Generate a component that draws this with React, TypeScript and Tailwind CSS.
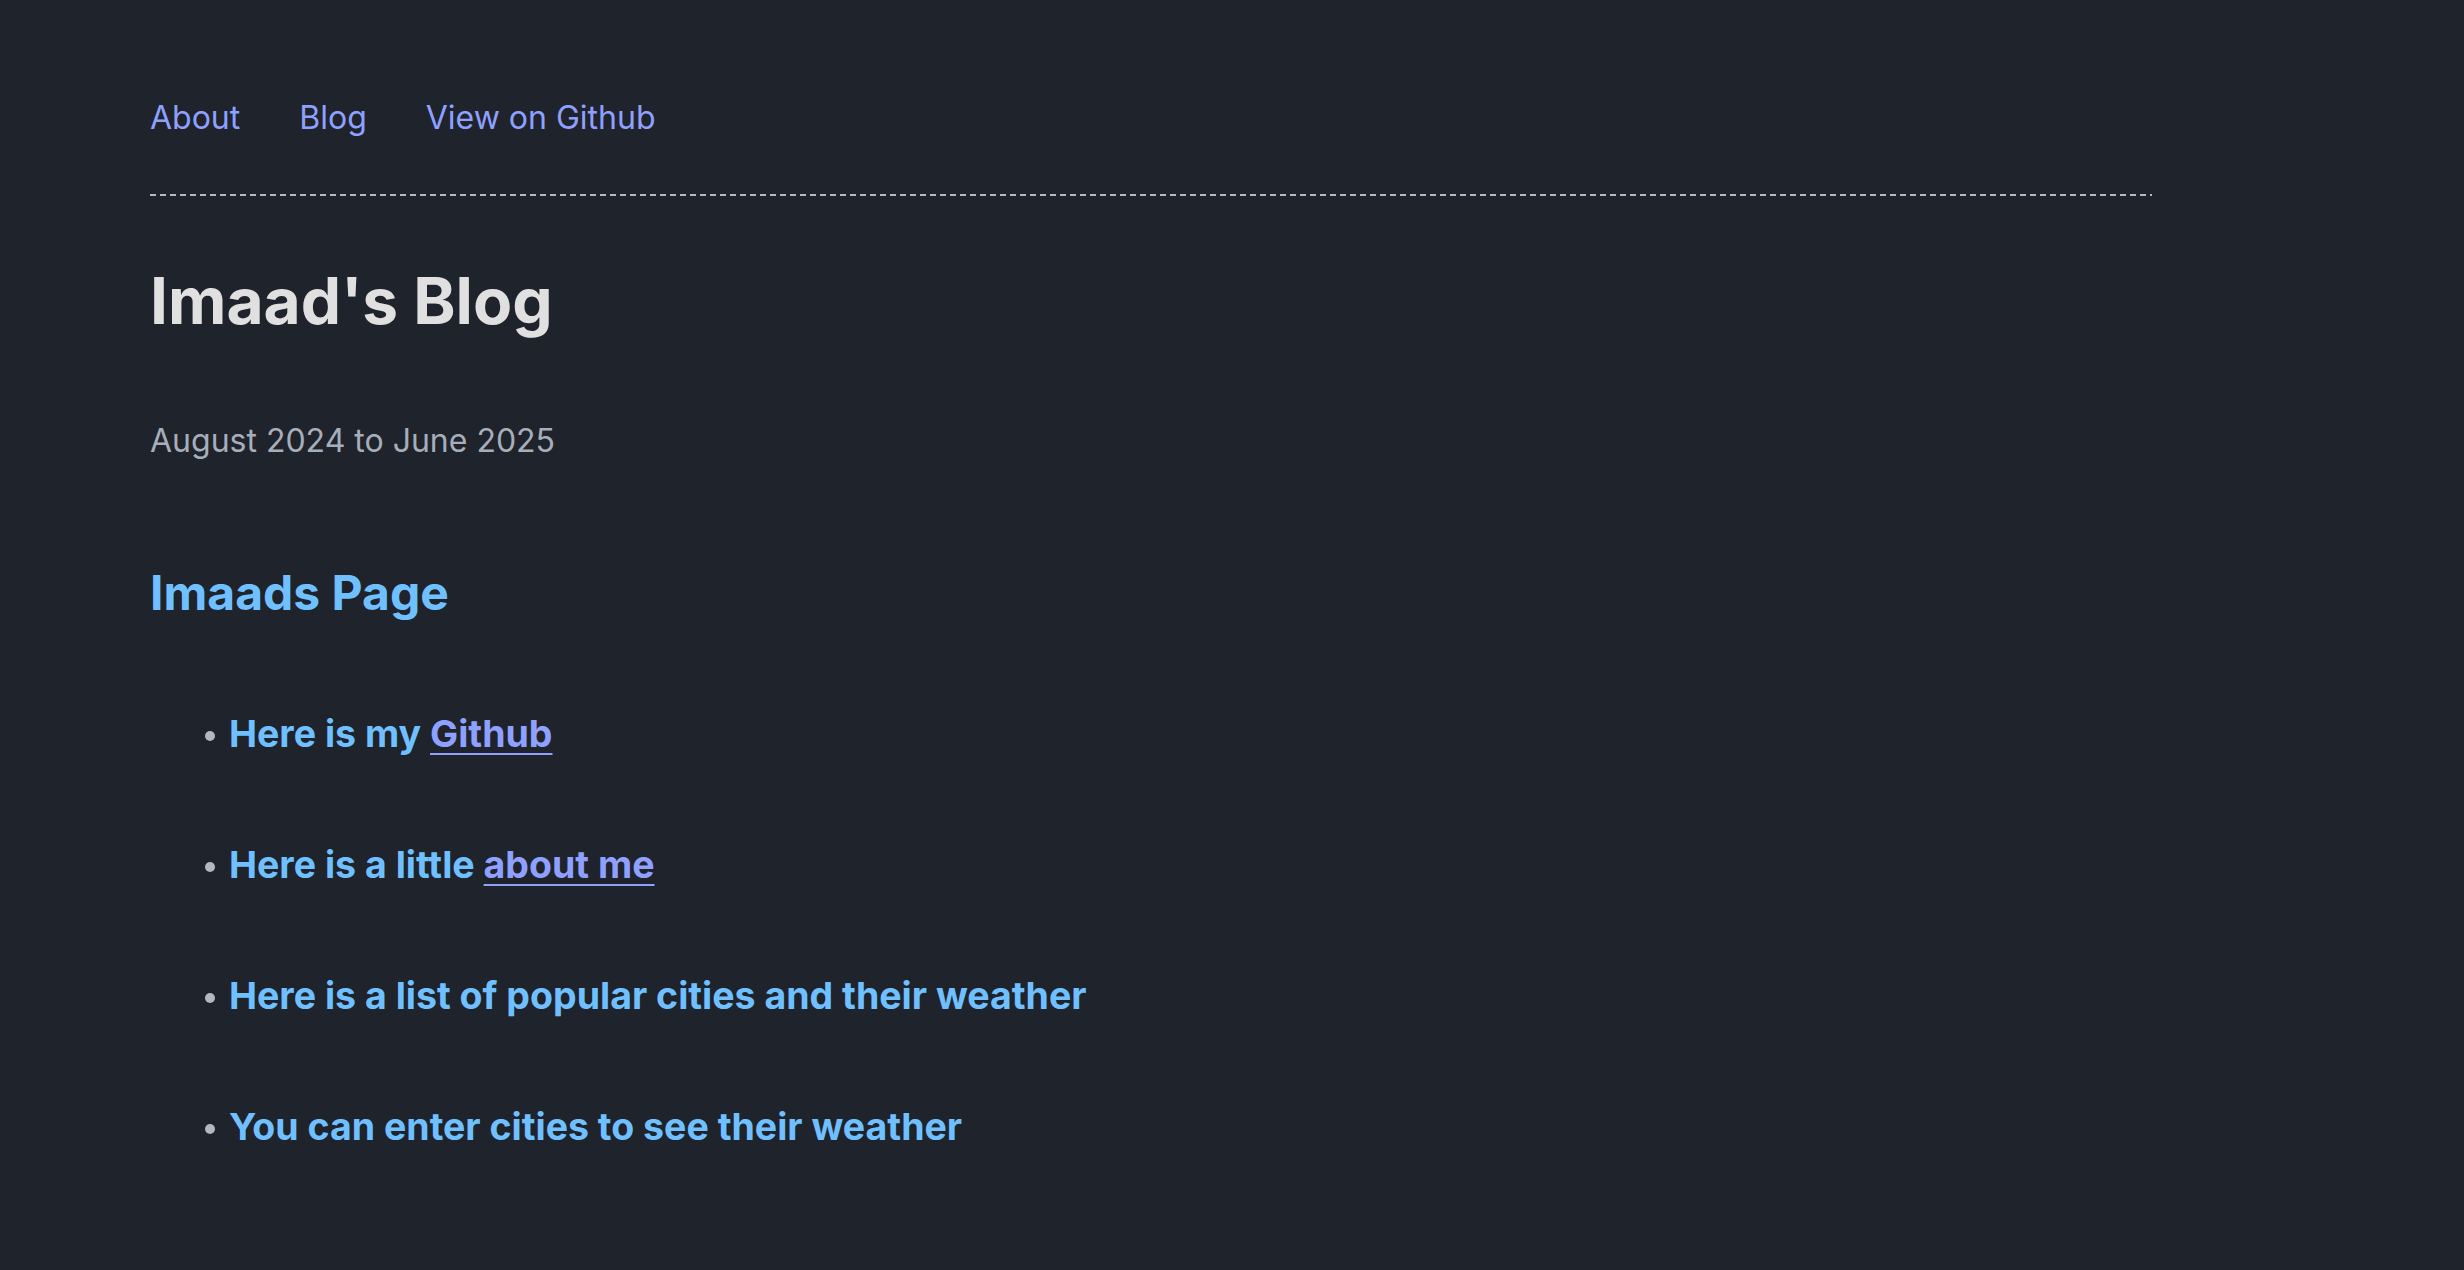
import React from "react";

export default function App() {
  const items: React.ReactNode[] = [
    <>
      Here is my{" "}
      <a href="#" className="text-[#8fa0ff] underline decoration-[2px] underline-offset-[6px]">
        Github
      </a>
    </>,
    <>
      Here is a little{" "}
      <a href="#" className="text-[#8fa0ff] underline decoration-[2px] underline-offset-[6px]">
        about me
      </a>
    </>,
    <>Here is a list of popular cities and their weather</>,
    <>You can enter cities to see their weather</>,
  ];
  return (
    <div
      className="min-h-[1270px] w-full bg-[#1f232b] pl-[150px]"
      style={{ fontFamily: "Inter, 'Noto Sans', sans-serif" }}
    >
      <div className="w-[2002px]">
        <nav className="flex gap-[59px] pt-[94px] text-[32px] leading-[48px] text-[#8fa0ff]">
          <a href="#">About</a>
          <a href="#">Blog</a>
          <a href="#">View on Github</a>
        </nav>
        <div className="mt-[52px] h-[2px] w-full bg-[repeating-linear-gradient(90deg,#b4bac4_0px,#b4bac4_6px,transparent_6px,transparent_10px)]" />
        <h1 className="mt-[66px] text-[64px] font-bold leading-[77px] text-[#e0e0e0]">
          Imaad's Blog
        </h1>
        <p className="mt-[78px] text-[32px] leading-[48px] text-[#a7aeb9]">
          August 2024 to June 2025
        </p>
        <h2 className="mt-[99px] text-[48px] font-bold leading-[58px] text-[#70c0ff]">
          Imaads Page
        </h2>
        <ul className="mt-[83px] flex flex-col gap-[74px] text-[37.5px] font-bold leading-[57px] text-[#70c0ff]">
          {items.map((it, i) => (
            <li key={i} className="flex items-center">
              <span className="ml-[55px] mr-[14px] mt-[4px] h-[10px] w-[10px] shrink-0 rounded-full bg-[#b3b8c0]" />
              <span>{it}</span>
            </li>
          ))}
        </ul>
      </div>
    </div>
  );
}
